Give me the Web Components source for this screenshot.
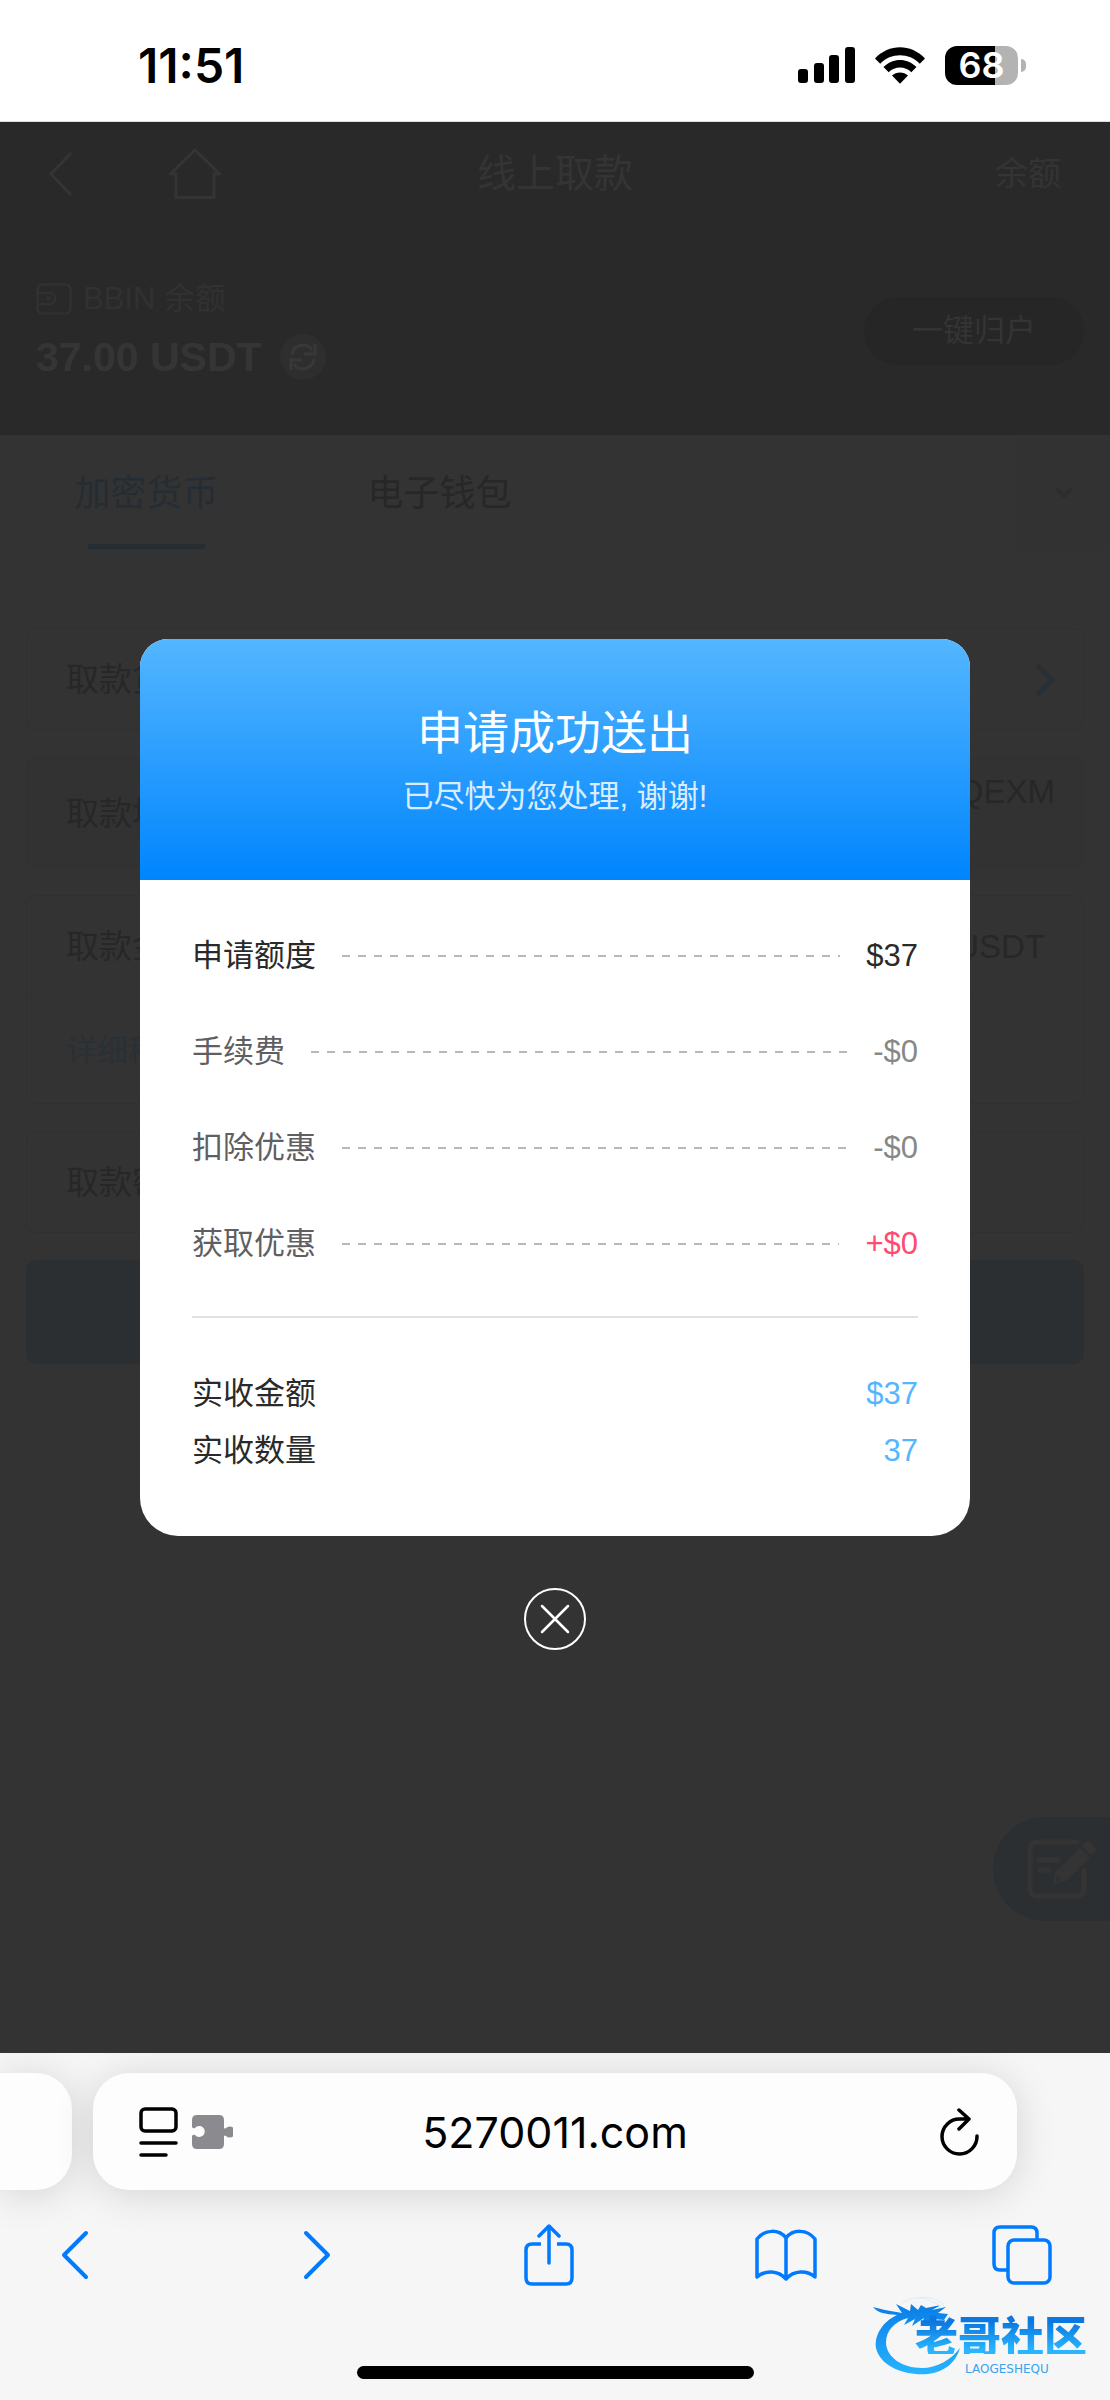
<!DOCTYPE html>
<html lang="zh-CN">
<head>
<meta charset="utf-8">
<meta name="viewport" content="width=device-width, initial-scale=1">
<title>线上取款</title>
<style>
body { margin: 0; background: #f6f6f6; font-family: "Liberation Sans", "Noto Sans CJK SC", sans-serif; }
</style>
</head>
<body>
<phone-screen></phone-screen>

<script>
const RESET = `
  *, *::before, *::after { box-sizing: border-box; }
  button { font: inherit; color: inherit; background: none; border: 0; padding: 0; margin: 0; cursor: pointer; }
  a { color: inherit; text-decoration: none; }
  svg { display: block; flex: none; }
  p, h1, h2, dl, dd, dt { margin: 0; font-weight: 400; }
`;

function define(name, css, html) {
  const template = document.createElement('template');
  template.innerHTML = `<style>${RESET}${css}</style>${html}`;
  customElements.define(name, class extends HTMLElement {
    constructor() {
      super();
      this.attachShadow({ mode: 'open' }).append(template.content.cloneNode(true));
    }
  });
}

/* Device status bar */
define('status-bar', `
  :host { display: flex; align-items: center; justify-content: space-between; height: 122px;
    padding: 10px 84px 0 138px; background: #fff; color: #000; border-bottom: 1px solid #ddd;
    font-family: Inter, sans-serif; }
  time { font-size: 48px; font-weight: 600; line-height: 48px; }
  .icons { display: flex; align-items: center; gap: 20px; }
  .battery { display: flex; align-items: center; gap: 3px; }
  .cell { display: flex; align-items: center; justify-content: center; width: 73px; height: 39px;
    border-radius: 12px; background: linear-gradient(90deg, #000 68%, #b3b3b3 68%);
    color: #fff; font-size: 36px; font-weight: 600; line-height: 39px; }
  .nub { width: 5px; height: 13px; border-radius: 0 6px 6px 0; background: #b3b3b3; }
`, `
  <time>11:51</time>
  <div class="icons">
    <svg width="57" height="37" viewBox="0 0 57 37"><rect y="22" width="10" height="14" rx="3"/><rect x="16" y="16" width="10" height="20" rx="3"/><rect x="31" y="8" width="10" height="28" rx="3"/><rect x="47" width="10" height="36" rx="3"/></svg>
    <svg width="50" height="37" viewBox="0 0 50 37"><path d="M0 11.5C14-3.5 36-3.5 50 11.5l-5.200 5.200C34 5.500 16 5.500 5.200 16.700Z"/><path d="M8.500 20C18 10.500 32 10.500 41.500 20l-5.200 5.200C30 19 20 19 13.700 25.200Z"/><path d="M17 28.500c4.500-4 11.500-4 16 0L25 36.700Z"/></svg>
    <div class="battery"><div class="cell">68</div><div class="nub"></div></div>
  </div>
`);

/* Title bar of the site */
define('site-header', `
  :host { display: grid; grid-template-columns: 1fr auto 1fr; align-items: center; height: 100px;
    padding: 4px 49px 0; color: #343434; }
  nav { display: flex; align-items: center; gap: 97px; }
  h1 { font-size: 39px; line-height: 50px; }
  .right { justify-self: end; font-size: 33px; line-height: 44px; }
`, `
  <nav>
    <a href="#back" aria-label="返回"><svg width="23" height="44" viewBox="0 0 23 44" fill="none" stroke="currentColor" stroke-width="3"><path d="M22 1 2 22l20 21"/></svg></a>
    <a href="#home" aria-label="首页"><svg width="52" height="52" viewBox="0 0 52 52" fill="none" stroke="currentColor" stroke-width="3"><path d="M7 49.500V26H1.500L26 2l24.500 24H45v23.500Z"/></svg></a>
  </nav>
  <h1>线上取款</h1>
  <a class="right" href="#balance">余额</a>
`);

/* Balance summary */
define('balance-panel', `
  :host { display: flex; align-items: center; justify-content: space-between; height: 213px;
    padding: 4px 26px 0 36px; color: #323232; }
  .left { display: flex; flex-direction: column; gap: 18px; }
  .name { display: flex; align-items: center; gap: 11px; font-size: 31px; line-height: 34px; color: #313131; }
  .sum { display: flex; align-items: center; gap: 18px; font-size: 41px; line-height: 46px; font-weight: 700; color: #353535; }
  .refresh { display: grid; place-items: center; width: 46px; height: 46px; border-radius: 50%; background: #2e2e2e; color: #383838; }
  .pill { width: 220px; height: 68px; border-radius: 34px; background: #262626; font-size: 31px; line-height: 68px; color: #343434; }
`, `
  <div class="left">
    <div class="name">
      <svg width="36" height="32" viewBox="0 0 36 32" fill="none" stroke="currentColor" stroke-width="2.500"><rect x="1.500" y="1.500" width="33" height="29" rx="5"/><path d="M2 10h12a5 5 0 0 1 5 5v1a5 5 0 0 1-5 5H2"/><circle cx="12.500" cy="15.500" r="1"/></svg>
      <span>BBIN 余额</span>
    </div>
    <div class="sum"><span>37.00 USDT</span>
      <button class="refresh" aria-label="刷新"><svg width="28" height="28" viewBox="0 0 28 28" fill="none" stroke="currentColor" stroke-width="3"><path d="M3 12A11 11 0 0 1 23 7M26 1v10H15"/><path d="M25 16A11 11 0 0 1 5 21M2 27V17h11"/></svg></button>
    </div>
  </div>
  <button class="pill">一键归户</button>
`);

/* Payment method tabs */
define('method-tabs', `
  :host { display: flex; height: 115px; border-bottom: 1px solid #313131; background: #333;
    font-size: 36px; line-height: 48px; color: #272727; }
  a { display: grid; grid-template-rows: 1fr auto; place-items: center; width: 293px; }
  a::after { content: ""; width: 117px; height: 5px; }
  a.on { color: #252d34; }
  a.on::after { background: #252d33; }
  a span { padding-top: 8px; }
  button { display: grid; place-items: center; width: 93px; margin-left: auto; background: #323232; color: #2d2d2d; }
`, `
  <a class="on" href="#crypto"><span>加密货币</span></a>
  <a href="#wallet"><span>电子钱包</span></a>
  <button aria-label="展开"><svg width="20" height="12" viewBox="0 0 20 12" fill="none" stroke="currentColor" stroke-width="4"><path d="m2 2 8 8 8-8"/></svg></button>
`);

/* One row of the form: label at the left, value slotted at the right */
define('field-row', `
  :host { display: flex; align-items: center; justify-content: space-between; height: 100px;
    padding: 2px 28px 0 39px; font-size: 33px; line-height: 44px; color: #272727; }
`, `<slot name="label"></slot><slot></slot>`);

define('withdraw-form', `
  :host { display: flex; flex-direction: column; gap: 27px; padding: 78px 26px 0; }
  .card { border: 1px solid #303030; border-radius: 10px; }
  .filled { background: #323232; border-color: #313131; }
  .filled field-row { height: 109px; }
  .address { align-self: flex-start; padding-top: 10px; }
  .split { border-top: 1px solid #313131; }
  .split field-row { height: 106px; font-size: 31px; color: #293036; }
  .unit { padding-right: 10px; }
  .submit { height: 104px; border-radius: 10px; background: #2b2f32; }
`, `
  <div class="card"><field-row><span slot="label">取款货币</span><svg width="20" height="34" viewBox="0 0 20 34" fill="none" stroke="#283036" stroke-width="5"><path d="m2 2 15 15L2 32"/></svg></field-row></div>
  <div class="card filled"><field-row><span slot="label">取款地址</span><span class="address">QEXM</span></field-row></div>
  <div class="card">
    <field-row><span slot="label">取款金额</span><span class="unit">USDT</span></field-row>
    <div class="split"><field-row><a slot="label" href="#audit">详细稽核</a></field-row></div>
  </div>
  <div class="card"><field-row><span slot="label">取款密码</span></field-row></div>
  <button class="submit" aria-label="提交"></button>
`);

/* Dialog line with a dashed leader between its two texts */
define('receipt-row', `
  :host { display: flex; align-items: center; gap: 26px; height: 56px; font-size: 31px; line-height: 40px; color: #5f5f63; }
  :host([strong]) { color: #2a2a2a; }
  i { flex: 1; height: 2px; }
  :host([leader]) i { background: repeating-linear-gradient(90deg, #b8b8b8 0 8px, transparent 8px 16px); }
  .value { color: var(--value, inherit); }
`, `<slot name="label"></slot><i></i><span class="value"><slot></slot></span>`);

define('result-dialog', `
  :host { display: flex; flex-direction: column; align-items: center; gap: 52px; padding: 517px 140px 0; }
  section { align-self: stretch; border-radius: 28px 28px 38px 38px; overflow: hidden; background: #fff; }
  header { display: flex; flex-direction: column; align-items: center; justify-content: center; gap: 10px;
    height: 241px; color: #fff; background: linear-gradient(#54b6ff, #0085fd); }
  h2 { font-size: 46px; line-height: 64px; }
  header p { font-size: 31px; line-height: 44px; color: #d9edff; }
  .lines { display: flex; flex-direction: column; gap: 40px; padding: 48px 0 44px; border-bottom: 2px solid #e2e2e2; }
  .totals { padding: 47px 0 57px; }
  .body { padding: 0 52px; }
  .totals receipt-row { height: 57px; --value: #54b6ff; }
  .muted { --value: #888; }
  .plus { --value: #ff4a72; }
`, `
  <section role="dialog" aria-modal="true">
    <header><h2>申请成功送出</h2><p>已尽快为您处理, 谢谢!</p></header>
    <div class="body">
      <div class="lines">
        <receipt-row leader strong><span slot="label">申请额度</span>$37</receipt-row>
        <receipt-row leader class="muted"><span slot="label">手续费</span>-$0</receipt-row>
        <receipt-row leader class="muted"><span slot="label">扣除优惠</span>-$0</receipt-row>
        <receipt-row leader class="plus"><span slot="label">获取优惠</span>+$0</receipt-row>
      </div>
      <div class="totals">
        <receipt-row strong><span slot="label">实收金额</span>$37</receipt-row>
        <receipt-row strong><span slot="label">实收数量</span>37</receipt-row>
      </div>
    </div>
  </section>
  <button aria-label="关闭"><svg width="62" height="62" viewBox="0 0 62 62" fill="none" stroke="#fff" stroke-linecap="round"><circle cx="31" cy="31" r="30" stroke-width="2"/><path d="m18 18 26 26M44 18 18 44" stroke-width="2.500"/></svg></button>
`);

/* Page below the dialog; both share one grid cell */
define('web-view', `
  :host { display: grid; position: relative; height: 1931px; background: #333; overflow: hidden; }
  .page, result-dialog { grid-area: 1 / 1; }
  .top { background: #292929; }
  result-dialog { position: relative; }
  .note { position: absolute; right: 0; top: 1695px; display: flex; align-items: center; width: 117px; height: 104px;
    padding-left: 34px; border-radius: 52px 0 0 52px; background: #2b2f32; }
`, `
  <div class="page">
    <div class="top"><site-header></site-header><balance-panel></balance-panel></div>
    <method-tabs></method-tabs>
    <withdraw-form></withdraw-form>
  </div>
  <button class="note" aria-label="反馈"><svg width="70" height="60" viewBox="0 0 70 60" fill="none" stroke="#343434" stroke-width="5" stroke-linecap="round"><path d="M50 3H10a7 7 0 0 0-7 7v40a7 7 0 0 0 7 7h40a7 7 0 0 0 7-7V31M12 21h19M13 31h9"/><path d="M26 45l3-13 24-23 10 10-24 23Z" fill="#343434" stroke="none"/><path d="m55 7 3-4q3-2 6 1l3 3q3 3 1 5l-4 4Z" fill="#343434" stroke="none"/><path d="m30 36 5 5-6 2Z" fill="#2b2f32" stroke="none"/></svg></button>
  <result-dialog></result-dialog>
`);

/* Site badge in the lower corner */
define('site-badge', `
  :host { display: grid; width: 224px; height: 84px; }
  svg, .words { grid-area: 1 / 1; }
  .words { display: flex; flex-direction: column; padding: 20px 0 0 43px; position: relative; }
  strong { font: 900 43px/40px "Noto Sans CJK SC", sans-serif; color: transparent; white-space: nowrap;
    background: linear-gradient(#0a78e0 20%, #2ab5ff 90%); background-clip: text; -webkit-background-clip: text; }
  small { font: 12px/14px "DejaVu Sans", sans-serif; color: #3aa2ee; padding: 8px 0 0 50px; }
`, `
  <svg width="100" height="84" viewBox="0 0 100 84">
    <defs><linearGradient id="g" x1="0" y1="0" x2="0" y2="1"><stop stop-color="#0a7de6"/><stop offset="1" stop-color="#27b4ff"/></linearGradient></defs>
    <path fill="url(#g)" d="M25 21C10 28 2 42 4 54c4 18 28 28 52 26 16-2 28-11 32-26-9 12-23 20-38 20C30 74 14 63 14 48 14 37 23 27 36 24l-4 7 11-6-3 7 12-8-3 8 12-7 11 1 4-6-10-1 8-6-14 3 9-5-15 3-5-3-3 5-7-6-1 7-14-7 6 9-17-3L1 13c5 6 12 7 24 8Z"/>
    <path d="M30 9c10-7 24-7 38 3M46 4c10-2 20 1 26 7" fill="none" stroke="#dceefb"/>
  </svg>
  <div class="words"><strong>老哥社区</strong><small>LAOGESHEQU</small></div>
`);

/* Browser toolbar */
define('browser-bar', `
  :host { display: flex; flex-direction: column; position: relative; height: 347px; padding-top: 20px;
    background: #f6f6f6; overflow: hidden; color: #007aff; }
  .tabs { display: grid; grid-template-columns: 72px 1fr 72px; gap: 21px; height: 117px; }
  .tab { background: #fdfdfd; border-radius: 36px; box-shadow: 0 4px 40px rgba(0,0,0,.14); }
  .prev { border-radius: 0 36px 36px 0; }
  .main { display: grid; grid-template-columns: 1fr auto 1fr; align-items: center; padding: 0 37px; color: #000; }
  .main .tools { display: flex; align-items: center; gap: 14px; padding-left: 9px; }
  .url { font: 43px/52px Inter, sans-serif; }
  .main button:last-child { justify-self: end; }
  .actions { display: flex; align-items: center; justify-content: space-between; height: 129px; padding: 0 58px 0 45px; }
  .actions button { display: grid; place-items: center; width: 60px; }
  .home { width: 397px; height: 13px; margin: 47px auto 0; border-radius: 7px; background: #000; }
  site-badge { position: absolute; right: 14px; bottom: 22px; }
`, `
  <div class="tabs">
    <div class="tab prev"></div>
    <div class="tab main">
      <div class="tools">
        <svg width="39" height="50" viewBox="0 0 39 50" fill="none" stroke="#000" stroke-width="3.500" stroke-linecap="round"><rect x="2" y="2" width="35" height="22" rx="4"/><path d="M2 36h35M2 48h25"/></svg>
        <svg width="41" height="34" viewBox="0 0 41 34" fill="#8a8a8f"><path d="M5 0h22q5 0 5 5v8q1 1 2 0a5.500 5.500 0 1 1 0 8q-1-1-2 0v8q0 5-5 5H5q-5 0-5-5v-8q1-2 3-1a5.500 5.500 0 1 0 0-7q-2 1-3-1V5q0-5 5-5Z"/></svg>
      </div>
      <button class="url">5270011.com</button>
      <button aria-label="重新载入"><svg width="40" height="48" viewBox="0 0 40 48" fill="none" stroke="#000" stroke-width="3.500" stroke-linecap="round" stroke-linejoin="round"><path d="M37 28A17.500 17.500 0 1 1 20 11h8M19 2l10 9-10 10"/></svg></button>
    </div>
  </div>
  <div class="actions">
    <button aria-label="后退"><svg width="28" height="50" viewBox="0 0 28 50" fill="none" stroke="currentColor" stroke-width="4" stroke-linecap="round" stroke-linejoin="round"><path d="M25 3 3 25l22 22"/></svg></button>
    <button aria-label="前进"><svg width="38" height="50" viewBox="0 0 38 50" fill="none" stroke="currentColor" stroke-width="4" stroke-linecap="round" stroke-linejoin="round"><path d="m13 3 22 22-22 22"/></svg></button>
    <button aria-label="分享"><svg width="50" height="62" viewBox="0 0 50 62" fill="none" stroke="currentColor" stroke-width="3.500" stroke-linecap="round"><path d="M17 20H8q-6 0-6 6v28q0 6 6 6h34q6 0 6-6V26q0-6-6-6h-9" stroke-linecap="butt"/><path d="M25 39V2M15 12 25 2l10 10" stroke-linejoin="round"/></svg></button>
    <button aria-label="书签"><svg width="62" height="52" viewBox="0 0 62 52" fill="none" stroke="currentColor" stroke-width="3.500" stroke-linejoin="round"><path d="M2 10C10 0 24 0 31 9c7-9 21-9 29 1v38c-8-7-21-7-29 2-8-9-21-9-29-2ZM31 9v41"/></svg></button>
    <button aria-label="标签页"><svg width="60" height="60" viewBox="0 0 60 60" fill="none" stroke="currentColor" stroke-width="3.500"><path d="M15 45H8q-6 0-6-6V8q0-6 6-6h31q6 0 6 6v7"/><rect x="16" y="15" width="42" height="43" rx="6"/></svg></button>
  </div>
  <div class="home"></div>
  <site-badge></site-badge>
`);

define('phone-screen', `:host { display: block; }`, `
  <status-bar></status-bar>
  <web-view></web-view>
  <browser-bar></browser-bar>
`);
</script>
</body>
</html>
